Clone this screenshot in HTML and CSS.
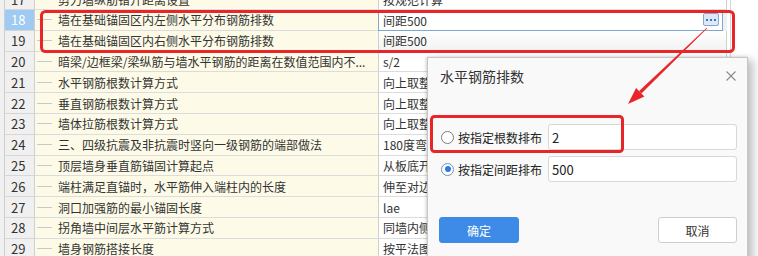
FILE: index.html
```html
<!DOCTYPE html>
<html lang="zh-CN">
<head>
<meta charset="utf-8">
<title>水平钢筋排数</title>
<link rel="stylesheet" href="styles.css">
</head>
<body>
<div class="screen">
  <div class="sheet">
    <div class="row"><div class="num">17</div><div class="name"><span class="tree"></span>剪力墙纵筋错开距离设置</div><div class="val">按规范计算</div></div>
    <div class="row row-sel"><div class="num">18</div><div class="name"><span class="tree"></span>墙在基础锚固区内左侧水平分布钢筋排数</div><div class="val val-edit">间距500<span class="more"><i></i><i></i><i></i></span></div></div>
    <div class="row"><div class="num">19</div><div class="name"><span class="tree"></span>墙在基础锚固区内右侧水平分布钢筋排数</div><div class="val val-hover">间距500</div></div>
    <div class="row"><div class="num">20</div><div class="name"><span class="tree"></span>暗梁/边框梁/梁纵筋与墙水平钢筋的距离在数值范围内不...</div><div class="val">s/2</div></div>
    <div class="row"><div class="num">21</div><div class="name"><span class="tree"></span>水平钢筋根数计算方式</div><div class="val">向上取整</div></div>
    <div class="row"><div class="num">22</div><div class="name"><span class="tree"></span>垂直钢筋根数计算方式</div><div class="val">向上取整</div></div>
    <div class="row"><div class="num">23</div><div class="name"><span class="tree"></span>墙体拉筋根数计算方式</div><div class="val">向上取整</div></div>
    <div class="row"><div class="num">24</div><div class="name"><span class="tree"></span>三、四级抗震及非抗震时竖向一级钢筋的端部做法</div><div class="val">180度弯钩</div></div>
    <div class="row"><div class="num">25</div><div class="name"><span class="tree"></span>顶层墙身垂直筋锚固计算起点</div><div class="val">从板底开始</div></div>
    <div class="row"><div class="num">26</div><div class="name"><span class="tree"></span>端柱满足直锚时，水平筋伸入端柱内的长度</div><div class="val">伸至对边</div></div>
    <div class="row"><div class="num">27</div><div class="name"><span class="tree"></span>洞口加强筋的最小锚固长度</div><div class="val">lae</div></div>
    <div class="row"><div class="num">28</div><div class="name"><span class="tree"></span>拐角墙中间层水平筋计算方式</div><div class="val">同墙内侧</div></div>
    <div class="row"><div class="num">29</div><div class="name"><span class="tree"></span>墙身钢筋搭接长度</div><div class="val">按平法图集</div></div>
  </div>
  <div class="gap"></div>
  <div class="rest"></div>

  <div class="dialog">
    <div class="dlg-head">
      <span class="dlg-title">水平钢筋排数</span>
      <svg class="close" width="10" height="10" viewBox="0 0 10 10"><path d="M0.5 0.5 L9.5 9.5 M9.5 0.5 L0.5 9.5" stroke="#8a8a8a" stroke-width="1.1" fill="none"/></svg>
    </div>
    <div class="dlg-body">
      <span class="radio"></span><span class="opt-label">按指定根数排布</span><span class="input">2</span>
      <span class="radio radio-on"></span><span class="opt-label">按指定间距排布</span><span class="input">500</span>
    </div>
    <div class="dlg-foot">
      <span class="btn btn-primary">确定</span>
      <span class="btn">取消</span>
    </div>
  </div>

  <svg class="marks" width="758" height="256" viewBox="0 0 758 256">
    <rect x="41.5" y="11.5" width="692" height="40" rx="4" ry="4" fill="none" stroke="#e8262a" stroke-width="3"/>
    <rect x="431.5" y="116.5" width="191" height="35" rx="3" ry="3" fill="none" stroke="#e8262a" stroke-width="3"/>
    <polygon points="707.3,28.3 706.7,27.7 639.1,91.0 641.4,93.4" fill="#e8262a"/>
    <polygon points="628,104 636.1,87.9 644.4,96.5" fill="#e8262a"/>
  </svg>
</div>
</body>
</html>
```
FILE: styles.css
```css
* { box-sizing: border-box; }
html, body { margin: 0; padding: 0; }
body {
  width: 758px;
  height: 256px;
  overflow: hidden;
  background: #ffffff;
  font-family: "Noto Sans CJK SC", "Noto Sans", sans-serif;
  color: #333333;
}
.screen {
  position: relative;
  display: flex;
  width: 758px;
  height: 256px;
  overflow: hidden;
}
.sheet {
  width: 727px;
  flex: none;
  margin-top: -10.8px;
  padding-left: 4px;
  background: #f0f0f0;
  display: flex;
  flex-direction: column;
}
.row {
  flex: none;
  height: 20.8px;
  display: grid;
  grid-template-columns: 31px 343px 349px;
}
.num {
  display: flex;
  align-items: center;
  padding-left: 6px;
  font-size: 13px;
  color: #333;
  background: #f0f0f0;
  border-left: 1px solid #cfcfcf;
  border-right: 1px solid #cfcfcf;
  border-bottom: 1px solid #d6d6d6;
}
.row-sel .num {
  background: #9fcaf2;
  color: #ffffff;
}
.name {
  display: flex;
  align-items: center;
  padding-left: 2px;
  font-size: 12px;
  white-space: nowrap;
  overflow: hidden;
  background: #fdfbe8;
  border-bottom: 1px solid #dcdcdc;
}
.tree {
  width: 15px;
  height: 1px;
  margin-right: 6px;
  background: #c8c8c8;
  flex: none;
}
.val {
  position: relative;
  display: flex;
  align-items: center;
  padding-left: 4px;
  font-size: 12px;
  white-space: nowrap;
  overflow: hidden;
  background: #ffffff;
  border-left: 1px solid #d0d0d0;
  border-right: 1px solid #d0d0d0;
  border-bottom: 1px solid #dcdcdc;
}
.val-edit {
  border: 1px solid #7fa8cf;
  margin-right: 4px;
  padding-left: 4px;
  overflow: visible;
}
.val-hover {
  background: linear-gradient(#ffffff, #f2f2f2);
}
.more {
  position: absolute;
  right: 3px;
  top: 2px;
  width: 16px;
  height: 13px;
  border: 1px solid #7ea9d8;
  border-radius: 2px;
  background: #dde9f7;
  display: flex;
  align-items: center;
  justify-content: center;
  gap: 2px;
}
.more i {
  display: block;
  width: 2px;
  height: 2px;
  background: #3a78c6;
}
.gap {
  width: 4px;
  flex: none;
  border-right: 1px solid #d6d6d6;
}
.rest {
  flex: 1;
  background: #ffffff;
}

/* dialog */
.dialog {
  position: absolute;
  left: 427px;
  top: 57px;
  width: 321px;
  height: 215px;
  background: #f9f9f9;
  border: 1px solid #c6c6c6;
  box-shadow: 6px 3px 8px rgba(0, 0, 0, 0.22), -1px 0 3px rgba(0, 0, 0, 0.18);
}
.dlg-head {
  height: 36px;
  display: flex;
  align-items: center;
  justify-content: space-between;
  padding: 0 11px 0 12px;
}
.dlg-title {
  font-size: 14px;
  color: #333;
}
.close { display: block; }
.dlg-body {
  display: grid;
  grid-template-columns: 13px 86px 189px;
  grid-auto-rows: 26px;
  column-gap: 4px;
  row-gap: 6px;
  align-items: center;
  padding: 30px 10px 0 13px;
}
.radio {
  width: 13px;
  height: 13px;
  border-radius: 50%;
  border: 1px solid #7d7d7d;
  background: #ffffff;
  position: relative;
}
.radio-on {
  border-color: #6f8fb8;
}
.radio-on::after {
  content: "";
  position: absolute;
  left: 2.5px;
  top: 2.5px;
  width: 6px;
  height: 6px;
  border-radius: 50%;
  background: #2d7ce0;
}
.opt-label {
  font-size: 12px;
  color: #222;
  white-space: nowrap;
}
.input {
  height: 26px;
  display: flex;
  align-items: center;
  padding-left: 3px;
  font-size: 13px;
  color: #222;
  background: #ffffff;
  border: 1px solid #d8d8d8;
  border-radius: 3px;
}
.dlg-foot {
  display: flex;
  justify-content: space-between;
  margin-top: 35px;
  padding: 0 10px 0 11px;
}
.btn {
  width: 79px;
  height: 26px;
  display: flex;
  align-items: center;
  justify-content: center;
  font-size: 12px;
  color: #333;
  background: #ffffff;
  border: 1px solid #cfcfcf;
  border-radius: 3px;
}
.btn-primary {
  width: 80px;
  background: #3d8be6;
  border-color: #3d8be6;
  color: #ffffff;
}
.marks {
  position: absolute;
  left: 0;
  top: 0;
  pointer-events: none;
}
```
